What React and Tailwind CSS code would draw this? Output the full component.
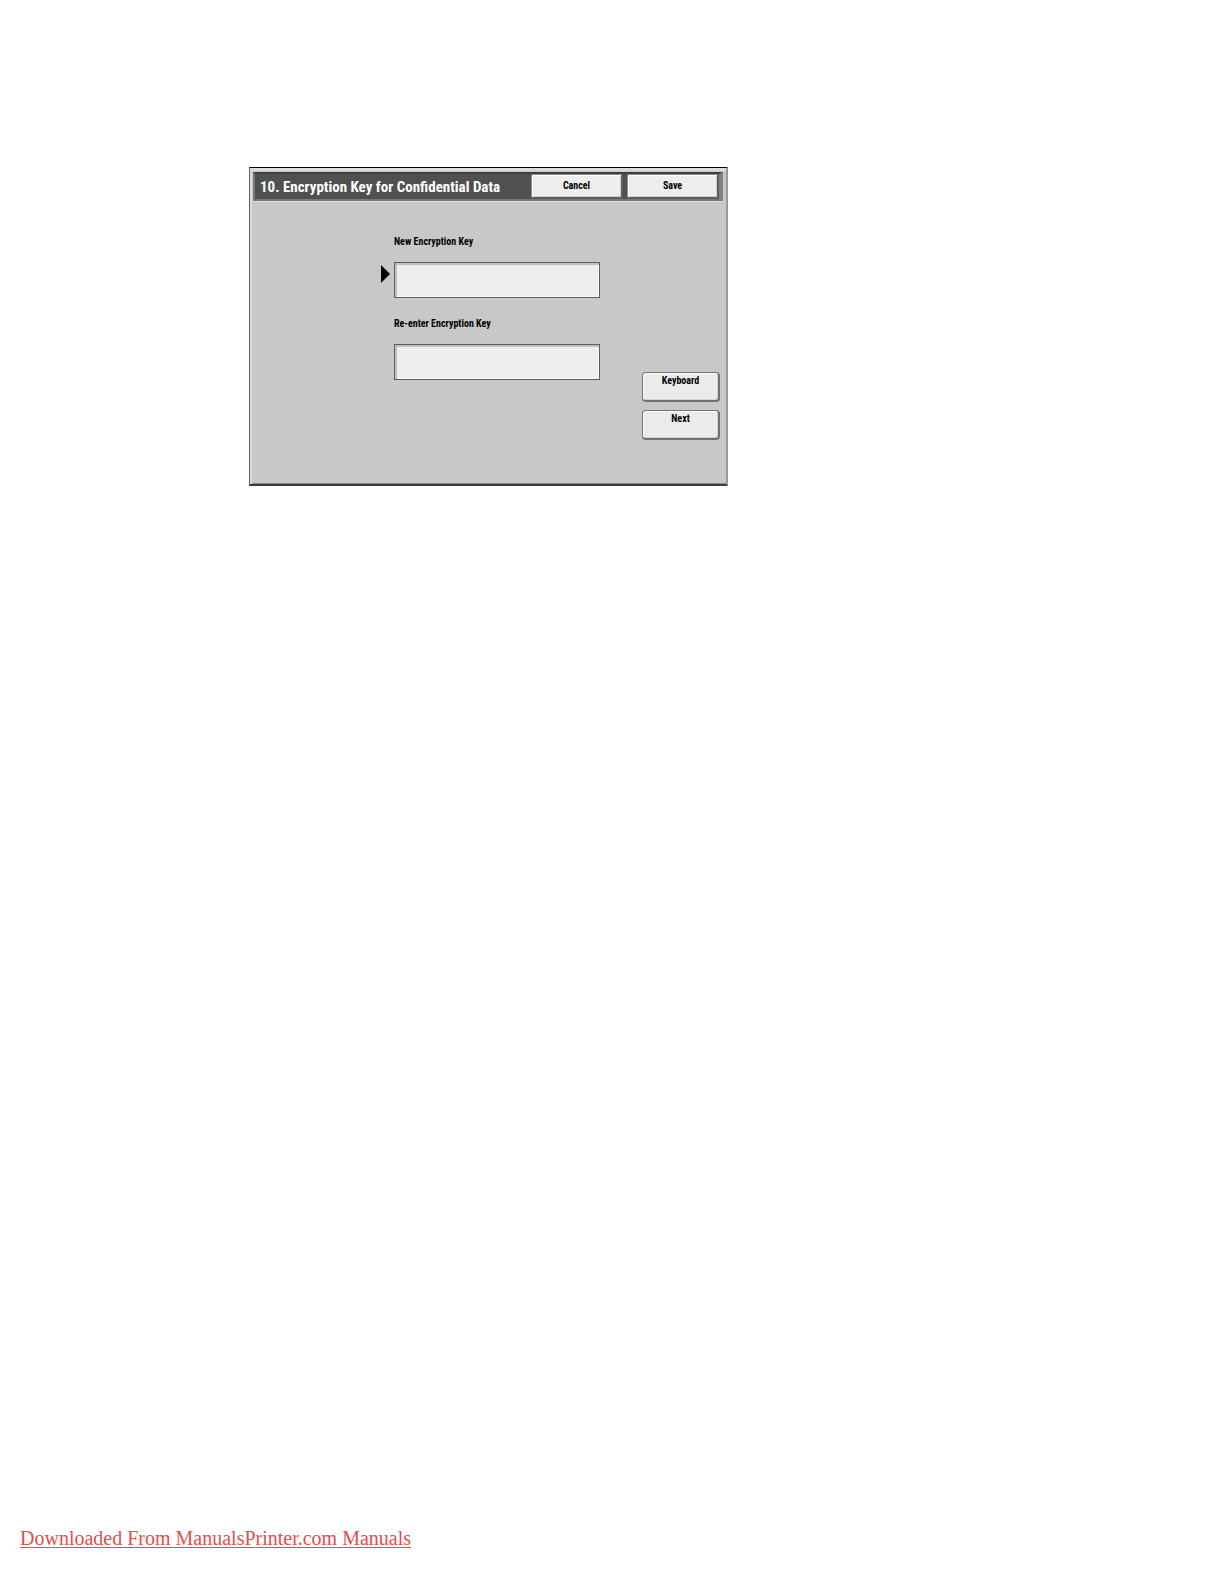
import React, { useState } from "react";

const fields = [
  { id: "new-key", label: "New Encryption Key" },
  { id: "confirm-key", label: "Re-enter Encryption Key" },
];

function HeaderButton({ children }) {
  return (
    <button
      type="button"
      className="h-[25px] w-[92px] shrink-0 rounded-xs border border-[#8a8a8a] border-r-2 border-b-2 border-r-[#5e5e5e] border-b-[#5e5e5e] bg-[#eeeeee] text-[10px] font-bold leading-3 text-black shadow-[inset_1px_1px_0_#ffffff,inset_-1px_-1px_0_#d0d0d0]"
    >
      {children}
    </button>
  );
}

function SideButton({ children }) {
  return (
    <button
      type="button"
      className="flex h-[30px] w-[78px] items-start justify-center rounded-sm border border-[#777777] border-r-2 border-b-2 border-r-[#707070] border-b-[#707070] bg-[#ebebeb] pt-[2px] text-[10px] font-bold leading-3 text-black shadow-[inset_1px_1px_0_#fafafa,inset_-1px_-1px_0_#d0d0d0]"
    >
      {children}
    </button>
  );
}

function KeyField({ id, label, active, onFocus }) {
  return (
    <div className="flex flex-col gap-[13px]">
      <label htmlFor={id} className="ml-[13px] text-[10px] font-bold leading-[14px]">
        {label}
      </label>
      <div className="flex items-start">
        <div className="w-[13px] pt-[3px]">
          {active && (
            <svg width="9" height="18" viewBox="0 0 9 18" aria-hidden="true">
              <path d="M0 0L9 9L0 18Z" fill="#000000" />
            </svg>
          )}
        </div>
        <input
          id={id}
          type="text"
          onFocus={onFocus}
          className="h-9 min-w-0 flex-1 border border-[#5c5c5c] bg-[#eeeeee] px-2 text-sm shadow-[inset_2px_2px_0_#c0c0c0,inset_-1px_-1px_0_#f8f8f8] outline-none"
        />
      </div>
    </div>
  );
}

function EncryptionPanel() {
  const [active, setActive] = useState("new-key");

  return (
    <section className="w-full max-w-[479px] border-t border-r-2 border-b-2 border-l border-t-black border-r-[#999999] border-b-[#3c3c3c] border-l-[#666666] bg-[#c8c8c8] font-['Roboto_Condensed',Roboto,sans-serif] text-black shadow-[inset_2px_3px_0_#dadada,inset_0_-1px_0_#8c8c8c]">
      <header className="mx-[3px] mt-1 flex h-[29px] items-center gap-1 border-t-2 border-r-4 border-b-2 border-l-2 border-t-[#3f3f3f] border-r-[#808080] border-b-[#777777] border-l-[#777777] bg-[#505050] pl-[5px] shadow-[0_1px_0_#dedede]">
        <h1 className="min-w-0 flex-1 whitespace-nowrap text-[15px] font-bold leading-5 text-white">
          10. Encryption Key for Confidential Data
        </h1>
        <HeaderButton>Cancel</HeaderButton>
        <HeaderButton>Save</HeaderButton>
      </header>

      <form className="flex justify-between pt-[34px] pr-[6px] pb-[44px] pl-[131px]">
        <div className="flex w-[219px] flex-col gap-[19px]">
          {fields.map((field) => (
            <KeyField
              key={field.id}
              id={field.id}
              label={field.label}
              active={active === field.id}
              onFocus={() => setActive(field.id)}
            />
          ))}
        </div>
        <div className="flex flex-col gap-2 pt-[137px]">
          <SideButton>Keyboard</SideButton>
          <SideButton>Next</SideButton>
        </div>
      </form>
    </section>
  );
}

export default function App() {
  return (
    <div className="flex min-h-screen flex-col justify-between bg-white">
      <main className="pt-[167px] pl-[249px]">
        <EncryptionPanel />
      </main>
      <footer className="px-5 pb-[33px]">
        <a
          href="#manuals"
          className="font-['Liberation_Serif',serif] text-xl leading-6 text-[#e84c4c] underline decoration-1 underline-offset-2"
        >
          Downloaded From ManualsPrinter.com Manuals
        </a>
      </footer>
    </div>
  );
}
